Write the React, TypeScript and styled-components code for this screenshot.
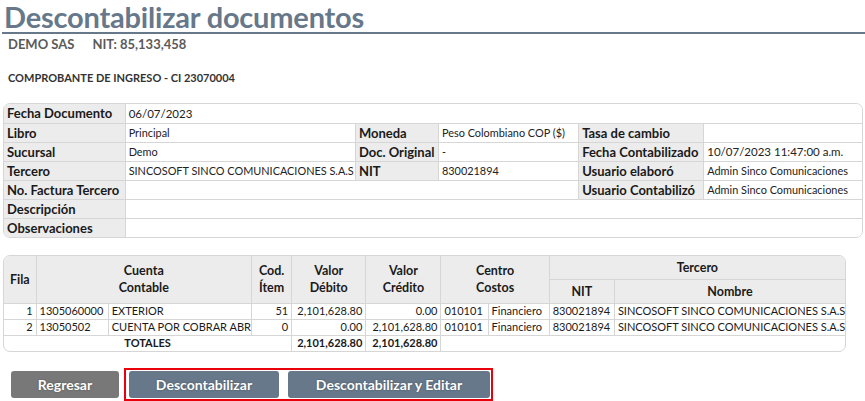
import { createGlobalStyle, styled } from "styled-components";

const GlobalStyle = createGlobalStyle`
    body {
        margin: 0;
        background: #ffffff;
        font-family: Lato, "Open Sans", sans-serif;
        color: #222;
    }
`;

const slate = "#66788a";

interface InfoCell {
    label?: boolean;
    text: string;
    span?: number;
}

const infoRows: Array<Array<InfoCell>> = [
    [{ label: true, text: "Fecha Documento" }, { text: "06/07/2023", span: 5 }],
    [
        { label: true, text: "Libro" }, { text: "Principal" },
        { label: true, text: "Moneda" }, { text: "Peso Colombiano COP ($)" },
        { label: true, text: "Tasa de cambio" }, { text: "" },
    ],
    [
        { label: true, text: "Sucursal" }, { text: "Demo" },
        { label: true, text: "Doc. Original" }, { text: "-" },
        { label: true, text: "Fecha Contabilizado" }, { text: "10/07/2023 11:47:00 a.m." },
    ],
    [
        { label: true, text: "Tercero" }, { text: "SINCOSOFT SINCO COMUNICACIONES S.A.S" },
        { label: true, text: "NIT" }, { text: "830021894" },
        { label: true, text: "Usuario elaboró" }, { text: "Admin Sinco Comunicaciones" },
    ],
    [
        { label: true, text: "No. Factura Tercero" }, { text: "", span: 3 },
        { label: true, text: "Usuario Contabilizó" }, { text: "Admin Sinco Comunicaciones" },
    ],
    [{ label: true, text: "Descripción" }, { text: "", span: 5 }],
    [{ label: true, text: "Observaciones" }, { text: "", span: 5 }],
];

const infoWidths = [121, 230, 83, 140, 125, 158];

const movimientos = [
    { fila: 1, cuenta: "1305060000", nombre: "EXTERIOR", item: "51", debito: "2,101,628.80", credito: "0.00", centro: "010101", centroNombre: "Financiero", nit: "830021894", tercero: "SINCOSOFT SINCO COMUNICACIONES S.A.S" },
    { fila: 2, cuenta: "13050502", nombre: "CUENTA POR COBRAR ABR", item: "0", debito: "0.00", credito: "2,101,628.80", centro: "010101", centroNombre: "Financiero", nit: "830021894", tercero: "SINCOSOFT SINCO COMUNICACIONES S.A.S" },
];

const movWidths = [32, 72, 143, 40, 74, 75, 47, 61, 65, 230];

export default function App() {
    return (
        <Page>
            <GlobalStyle />
            <Title>Descontabilizar documentos</Title>
            <Company>DEMO SAS<Gap />NIT: 85,133,458</Company>
            <Voucher>COMPROBANTE DE INGRESO - CI 23070004</Voucher>

            <TableFrame $width={858}>
                <Table>
                    <colgroup>
                        {infoWidths.map((w, i) => <col key={i} style={{ width: w }} />)}
                    </colgroup>
                    <tbody>
                        {infoRows.map((row, r) => (
                            <InfoRow key={r}>
                                {row.map((cell, c) => cell.label
                                    ? <InfoLabel key={c}>{cell.text}</InfoLabel>
                                    : <InfoValue key={c} colSpan={cell.span} $big={r === 0 || (r === 2 && c === 5)}>{cell.text}</InfoValue>
                                )}
                            </InfoRow>
                        ))}
                    </tbody>
                </Table>
            </TableFrame>

            <TableFrame $width={841} $top={17}>
                <Table>
                    <colgroup>
                        {movWidths.map((w, i) => <col key={i} style={{ width: w }} />)}
                    </colgroup>
                    <thead>
                        <HeadRowTop>
                            <Th rowSpan={2}>Fila</Th>
                            <Th rowSpan={2} colSpan={2}>Cuenta<br />Contable</Th>
                            <Th rowSpan={2}>Cod.<br />Ítem</Th>
                            <Th rowSpan={2}>Valor<br />Débito</Th>
                            <Th rowSpan={2}>Valor<br />Crédito</Th>
                            <Th rowSpan={2} colSpan={2}>Centro<br />Costos</Th>
                            <Th colSpan={2}>Tercero</Th>
                        </HeadRowTop>
                        <HeadRowBottom>
                            <Th>NIT</Th>
                            <Th>Nombre</Th>
                        </HeadRowBottom>
                    </thead>
                    <tbody>
                        {movimientos.map((m) => (
                            <DataRow key={m.fila}>
                                <Td $align="right">{m.fila}</Td>
                                <Td>{m.cuenta}</Td>
                                <Td>{m.nombre}</Td>
                                <Td $align="right">{m.item}</Td>
                                <Td $align="right">{m.debito}</Td>
                                <Td $align="right">{m.credito}</Td>
                                <Td>{m.centro}</Td>
                                <Td>{m.centroNombre}</Td>
                                <Td>{m.nit}</Td>
                                <Td>{m.tercero}</Td>
                            </DataRow>
                        ))}
                        <DataRow>
                            <Td colSpan={4} $align="center" $bold>TOTALES</Td>
                            <Td $align="right" $bold>2,101,628.80</Td>
                            <Td $align="right" $bold>2,101,628.80</Td>
                            <Td colSpan={4} />
                        </DataRow>
                    </tbody>
                </Table>
            </TableFrame>

            <Actions>
                <Button $tone="#787878" $width={108}>Regresar</Button>
                <Highlight>
                    <Button $tone={slate} $width={150}>Descontabilizar</Button>
                    <Button $tone={slate} $width={202}>Descontabilizar y Editar</Button>
                </Highlight>
            </Actions>
        </Page>
    );
}

const Page = styled.div`
    width: 865px;
    padding: 0 0 0 2px;
    box-sizing: border-box;
`;

const Title = styled.h1`
    margin: 0;
    padding: 2px 0 0 2px;
    font-size: 29px;
    line-height: 30px;
    font-weight: 700;
    color: ${slate};
    border-bottom: 2px solid ${slate};
    letter-spacing: -0.2px;
    white-space: nowrap;
`;

const Company = styled.div`
    margin: 2px 0 0 6px;
    font-size: 13px;
    line-height: 16px;
    font-weight: 700;
    color: #5a5a5a;
    display: flex;
`;

const Gap = styled.span`
    display: inline-block;
    width: 18px;
`;

const Voucher = styled.div`
    margin: 19px 0 0 6px;
    font-size: 11px;
    line-height: 14px;
    font-weight: 700;
    color: #333;
`;

const TableFrame = styled.div<{ $width: number; $top?: number }>`
    width: ${(p) => p.$width}px;
    margin: ${(p) => p.$top ?? 18}px 0 0 1px;
    border: 1px solid #d6d6d6;
    border-radius: 7px;
    overflow: hidden;
`;

const Table = styled.table`
    width: 100%;
    border-collapse: collapse;
    table-layout: fixed;
    border-style: hidden;
`;

const InfoRow = styled.tr`
    height: 19px;
`;

const InfoLabel = styled.td`
    background: #ececec;
    border: 1px solid #d6d6d6;
    padding: 0 3px;
    font-size: 13px;
    font-weight: 700;
    color: #1a1a1a;
    white-space: nowrap;
    overflow: hidden;
`;

const InfoValue = styled.td<{ $big?: boolean }>`
    background: #ffffff;
    border: 1px solid #d6d6d6;
    padding: 0 3px;
    font-size: ${(p) => (p.$big ? 11.5 : 10.9)}px;
    color: #222;
    white-space: nowrap;
    overflow: hidden;
`;

const HeadRowTop = styled.tr`
    height: 23px;
`;

const HeadRowBottom = styled.tr`
    height: 24px;
`;

const Th = styled.th`
    background: #ececec;
    border: 1px solid #d6d6d6;
    padding: 0 2px;
    font-size: 12.5px;
    line-height: 17px;
    font-weight: 700;
    color: #1a1a1a;
    text-align: center;
`;

const DataRow = styled.tr`
    height: 16px;
`;

const Td = styled.td<{ $align?: string; $bold?: boolean }>`
    border: 1px solid #d6d6d6;
    padding: 0 3px;
    font-size: 11px;
    line-height: 14px;
    font-weight: ${(p) => (p.$bold ? 700 : 400)};
    text-align: ${(p) => p.$align ?? "left"};
    white-space: nowrap;
    overflow: hidden;
    color: #1a1a1a;
`;

const Actions = styled.div`
    margin: 16px 0 0 9px;
    display: flex;
    align-items: center;
    gap: 5px;
`;

const Highlight = styled.div`
    display: flex;
    gap: 9px;
    border: 2px solid #e8000b;
    padding: 1px 1px 1px 3px;
`;

const Button = styled.button<{ $tone: string; $width: number }>`
    width: ${(p) => p.$width}px;
    height: 27px;
    border: none;
    border-radius: 3px;
    background: ${(p) => p.$tone};
    color: #ffffff;
    font-family: Lato, "Open Sans", sans-serif;
    font-size: 14px;
    font-weight: 700;
    text-shadow: 0 0 2px rgba(0, 0, 0, 0.35);
    padding: 0;
    cursor: pointer;
`;
